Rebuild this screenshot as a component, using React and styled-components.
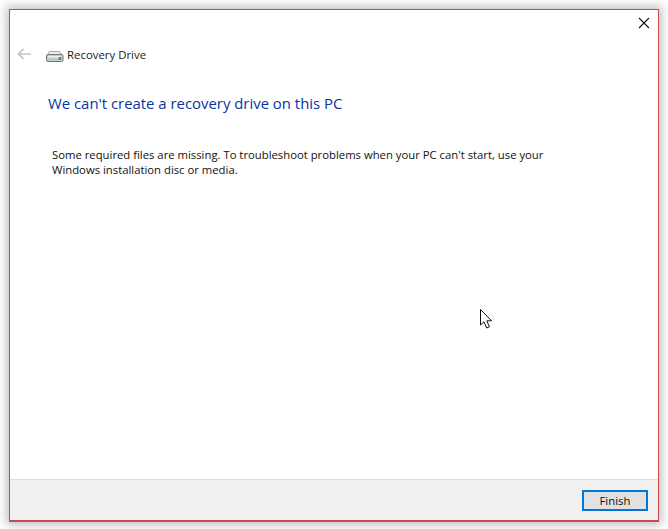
import styled, { createGlobalStyle } from "styled-components";

const GlobalStyle = createGlobalStyle`
  html, body {
    margin: 0;
    padding: 0;
    background: #fff;
  }
  body {
    width: 668px;
    height: 529px;
    overflow: hidden;
    font-family: "Open Sans", "Noto Sans", "Liberation Sans", sans-serif;
  }
`;

const Desktop = styled.div`
  box-sizing: border-box;
  width: 668px;
  height: 529px;
  padding: 9px 9px 7px 9px;
  background: #fff;
`;

const Win = styled.div`
  position: relative;
  box-sizing: border-box;
  width: 650px;
  height: 513px;
  display: flex;
  flex-direction: column;
  background: #fff;
  border: 1px solid #c9494c;
  border-bottom-width: 2px;
  box-shadow: 0 0 9px 3px rgba(0, 0, 0, 0.24);
`;

const TitleRow = styled.div`
  display: flex;
  justify-content: flex-end;
  height: 27px;
  padding: 6px 7px 0 0;
  box-sizing: border-box;
`;

const CloseButton = styled.button`
  width: 14px;
  height: 14px;
  padding: 0;
  border: 0;
  background: none;
  display: flex;
`;

const NavRow = styled.div`
  display: flex;
  align-items: center;
  height: 22px;
  margin-top: 6px;
  padding-left: 7px;
`;

const BackButton = styled.span`
  display: flex;
  width: 15px;
  height: 14px;
  margin-right: 14px;
`;

const DriveIcon = styled.span`
  display: flex;
  width: 18px;
  height: 12px;
  margin: 4px 3px 0 0;
`;

const NavTitle = styled.span`
  font-size: 11.4px;
  color: #1a1a1a;
  white-space: nowrap;
`;

const Content = styled.div`
  flex: 1;
  padding: 27px 0 0 38px;
`;

const Heading = styled.h1`
  margin: 0;
  font-size: 14.9px;
  line-height: 23px;
  font-weight: 400;
  color: #0536a4;
  white-space: nowrap;
`;

const Message = styled.p`
  margin: 33px 0 0 4px;
  font-size: 11.3px;
  line-height: 14.5px;
  color: #111;
  white-space: nowrap;
`;

const Footer = styled.div`
  display: flex;
  justify-content: flex-end;
  align-items: flex-start;
  box-sizing: border-box;
  height: 41px;
  padding: 10px 10px 0 0;
  background: #f0f0f0;
  border-top: 1px solid #dfdfdf;
`;

const FinishButton = styled.button`
  box-sizing: border-box;
  width: 66px;
  height: 21px;
  padding: 0;
  font-family: inherit;
  font-size: 11.4px;
  line-height: 15px;
  color: #111;
  background: #e1e1e1;
  border: 2px solid #0078d7;
`;

const Cursor = styled.svg`
  position: absolute;
  left: 470px;
  top: 299px;
`;

export default function App() {
  return (
    <>
      <GlobalStyle />
      <Desktop>
        <Win>
          <TitleRow>
            <CloseButton aria-label="Close">
              <svg width="14" height="14" viewBox="0 0 14 14">
                <path d="M2 2 L12 12 M12 2 L2 12" stroke="#111" strokeWidth="1.1" fill="none" />
              </svg>
            </CloseButton>
          </TitleRow>
          <NavRow>
            <BackButton>
              <svg width="15" height="14" viewBox="0 0 15 14">
                <path d="M1.5 7 H14 M6.5 2 L1.5 7 L6.5 12" stroke="#c4c4c4" strokeWidth="1.7" fill="none" />
              </svg>
            </BackButton>
            <DriveIcon>
              <svg width="18" height="12" viewBox="0 0 18 12">
                <path d="M3.5 1.5 H13.5 L16 5 H1.5 Z" fill="#ececec" stroke="#a8a8a8" />
                <rect x="0.5" y="4.5" width="16.5" height="7" rx="1.5" fill="#c6caca" stroke="#777" />
                <rect x="2" y="6" width="13" height="1.5" fill="#efefef" />
                <rect x="12.5" y="7" width="2.5" height="3" fill="#35a83a" />
              </svg>
            </DriveIcon>
            <NavTitle>Recovery Drive</NavTitle>
          </NavRow>
          <Content>
            <Heading>We can't create a recovery drive on this PC</Heading>
            <Message>
              Some required files are missing. To troubleshoot problems when your PC can't start, use your
              <br />
              Windows installation disc or media.
            </Message>
          </Content>
          <Footer>
            <FinishButton>Finish</FinishButton>
          </Footer>
          <Cursor width="14" height="21" viewBox="0 0 14 21">
            <path
              d="M0.5 0.5 V16 L4 12.8 L6.6 19 L9.4 17.8 L6.8 11.8 H11.6 Z"
              fill="#fff"
              stroke="#111"
              strokeWidth="1"
            />
          </Cursor>
        </Win>
      </Desktop>
    </>
  );
}
